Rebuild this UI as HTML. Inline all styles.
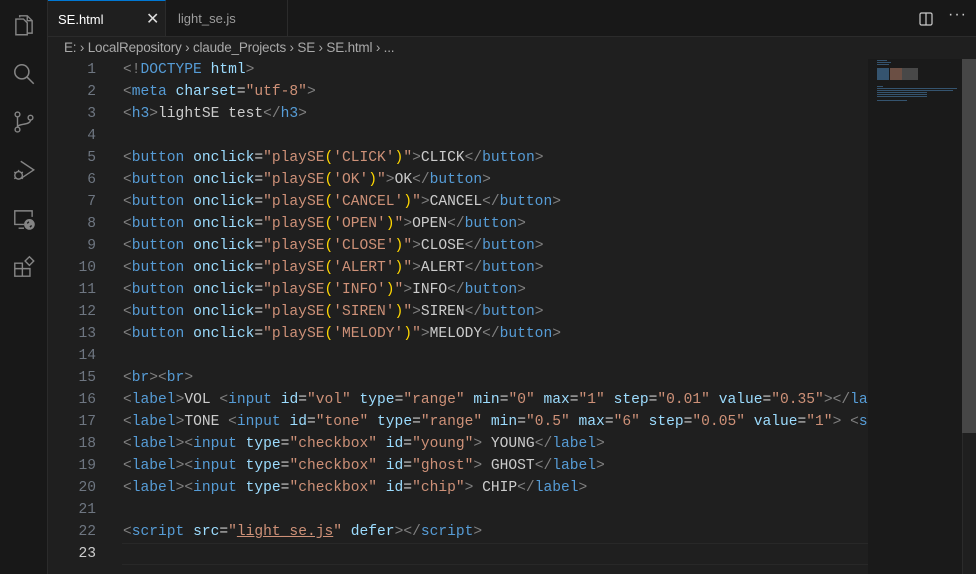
<!DOCTYPE html>
<html><head><meta charset="utf-8"><style>
html,body{margin:0;width:976px;height:574px;overflow:hidden}
body{background:#1f1f1f;position:relative;font-family:"Liberation Sans",sans-serif}
#act{position:absolute;left:0;top:0;width:47px;height:574px;background:#181818;border-right:1px solid #2b2b2b}
#act svg{position:absolute;left:11px}
#tabs{position:absolute;left:48px;top:0;right:0;height:36px;background:#181818;border-bottom:1px solid #2b2b2b}
.tab{position:absolute;top:0;height:36px;line-height:38px;font-size:13px;color:#9d9d9d;border-right:1px solid #2b2b2b}
.tab.on{background:#1f1f1f;color:#fff;border-top:1px solid #0078d4;height:36px;box-sizing:border-box;line-height:37px}
#bc{position:absolute;left:64px;top:40px;font-size:13.5px;color:#a9a9a9;letter-spacing:-0.2px}
#code{position:absolute;left:0;top:59px;font-family:"Liberation Mono",monospace;font-size:14.6px;line-height:22px;white-space:pre;color:#cccccc}
.ln{position:absolute;left:56px;width:40px;text-align:right;color:#6e7681}
.cl{position:absolute;left:123px}
.p{color:#808080}.t{color:#569cd6}.a{color:#9cdcfe}.s{color:#ce9178}.y{color:#ffd700}
#cur{position:absolute;left:122px;top:543px;width:746px;height:20px;border-top:1px solid #282828;border-bottom:1px solid #282828}
#mm{position:absolute;left:868px;top:59px;width:94px;height:515px;background:#1a1a1a}
#sb{position:absolute;left:962px;top:59px;width:14px;height:374px;background:#464646}
#sbt{position:absolute;left:962px;top:59px;width:1px;height:515px;background:#2b2b2b}
</style></head><body>
<div id="act">
<svg style="top:12px" width="26" height="26" viewBox="0 0 24 24" fill="none" stroke="#858585" stroke-width="1.3"><path d="M8 5V3.5h7l4.5 4.5v11.5H15"/><path d="M4.5 6.5h7l3.5 3.5v11H4.5z"/><path d="M15 3.5V8h4.5"/></svg>
<svg style="top:61px" width="26" height="26" viewBox="0 0 24 24" fill="none" stroke="#858585" stroke-width="1.4"><circle cx="10" cy="10" r="6.5"/><path d="M14.8 14.8L21 21"/></svg>
<svg style="top:109px" width="26" height="26" viewBox="0 0 24 24" fill="none" stroke="#858585" stroke-width="1.3"><circle cx="6" cy="5" r="2.2"/><circle cx="6" cy="19" r="2.2"/><circle cx="18" cy="8" r="2.2"/><path d="M6 7.2v9.6M18 10.2c0 5-12 3-12 6.6"/></svg>
<svg style="top:158px" width="26" height="26" viewBox="0 0 24 24" fill="none" stroke="#858585" stroke-width="1.3"><path d="M9 3l12 8-12 8"/><circle cx="7" cy="16" r="3.5"/><path d="M3 13l2 1M3 19l2-1M11 13l-2 1M11 19l-2-1M7 12v-1"/></svg>
<svg style="top:206px" width="26" height="26" viewBox="0 0 24 24" fill="none" stroke="#858585" stroke-width="1.3"><path d="M12 17H3.5V4.5h16V10"/><path d="M7 20.5h5"/><circle cx="17" cy="17" r="4.3" fill="#858585"/><path d="M15 16l1.5-1.5M19 18l-1.5 1.5" stroke="#181818"/></svg>
<svg style="top:254px" width="26" height="26" viewBox="0 0 24 24" fill="none" stroke="#858585" stroke-width="1.3"><path d="M3.5 8.5h7v12h-7zM10.5 13.5h7v7h-7zM3.5 13.5h7"/><path d="M13 6.5l4-4 4 4-4 4z"/></svg>
</div>
<div id="tabs">
<div class="tab on" style="left:0;width:118px"><span style="position:absolute;left:10px">SE.html</span><span style="position:absolute;left:98px;font-size:16px;color:#ddd">✕</span></div>
<div class="tab" style="left:118px;width:121px"><span style="position:absolute;left:12px">light_se.js</span></div>
<svg style="position:absolute;left:871px;top:12px" width="14" height="14" viewBox="0 0 14 14" fill="none" stroke="#ccc" stroke-width="1.2"><rect x="1" y="1" width="12" height="12" rx="1.5"/><path d="M7 1v12"/></svg>
<span style="position:absolute;left:900px;top:6px;color:#ccc;font-size:16px;letter-spacing:1px">···</span>
</div>
<div id="bc">E: › LocalRepository › claude_Projects › SE › SE.html › ...</div>
<div id="cur"></div>
<div id="code">
<div class="ln" style="top:0">1</div><div class="cl" style="top:0"><span class="p">&lt;!</span><span class="t">DOCTYPE</span> <span class="a">html</span><span class="p">&gt;</span></div>
<div class="ln" style="top:22px">2</div><div class="cl" style="top:22px"><span class="p">&lt;</span><span class="t">meta</span> <span class="a">charset</span>=<span class="s">"utf-8"</span><span class="p">&gt;</span></div>
<div class="ln" style="top:44px">3</div><div class="cl" style="top:44px"><span class="p">&lt;</span><span class="t">h3</span><span class="p">&gt;</span>lightSE test<span class="p">&lt;/</span><span class="t">h3</span><span class="p">&gt;</span></div>
<div class="ln" style="top:66px">4</div>
<div class="ln" style="top:88px">5</div><div class="cl" style="top:88px"><span class="p">&lt;</span><span class="t">button</span> <span class="a">onclick</span>=<span class="s">"playSE<span class="y">(</span>'CLICK'<span class="y">)</span>"</span><span class="p">&gt;</span>CLICK<span class="p">&lt;/</span><span class="t">button</span><span class="p">&gt;</span></div>
<div class="ln" style="top:110px">6</div><div class="cl" style="top:110px"><span class="p">&lt;</span><span class="t">button</span> <span class="a">onclick</span>=<span class="s">"playSE<span class="y">(</span>'OK'<span class="y">)</span>"</span><span class="p">&gt;</span>OK<span class="p">&lt;/</span><span class="t">button</span><span class="p">&gt;</span></div>
<div class="ln" style="top:132px">7</div><div class="cl" style="top:132px"><span class="p">&lt;</span><span class="t">button</span> <span class="a">onclick</span>=<span class="s">"playSE<span class="y">(</span>'CANCEL'<span class="y">)</span>"</span><span class="p">&gt;</span>CANCEL<span class="p">&lt;/</span><span class="t">button</span><span class="p">&gt;</span></div>
<div class="ln" style="top:154px">8</div><div class="cl" style="top:154px"><span class="p">&lt;</span><span class="t">button</span> <span class="a">onclick</span>=<span class="s">"playSE<span class="y">(</span>'OPEN'<span class="y">)</span>"</span><span class="p">&gt;</span>OPEN<span class="p">&lt;/</span><span class="t">button</span><span class="p">&gt;</span></div>
<div class="ln" style="top:176px">9</div><div class="cl" style="top:176px"><span class="p">&lt;</span><span class="t">button</span> <span class="a">onclick</span>=<span class="s">"playSE<span class="y">(</span>'CLOSE'<span class="y">)</span>"</span><span class="p">&gt;</span>CLOSE<span class="p">&lt;/</span><span class="t">button</span><span class="p">&gt;</span></div>
<div class="ln" style="top:198px">10</div><div class="cl" style="top:198px"><span class="p">&lt;</span><span class="t">button</span> <span class="a">onclick</span>=<span class="s">"playSE<span class="y">(</span>'ALERT'<span class="y">)</span>"</span><span class="p">&gt;</span>ALERT<span class="p">&lt;/</span><span class="t">button</span><span class="p">&gt;</span></div>
<div class="ln" style="top:220px">11</div><div class="cl" style="top:220px"><span class="p">&lt;</span><span class="t">button</span> <span class="a">onclick</span>=<span class="s">"playSE<span class="y">(</span>'INFO'<span class="y">)</span>"</span><span class="p">&gt;</span>INFO<span class="p">&lt;/</span><span class="t">button</span><span class="p">&gt;</span></div>
<div class="ln" style="top:242px">12</div><div class="cl" style="top:242px"><span class="p">&lt;</span><span class="t">button</span> <span class="a">onclick</span>=<span class="s">"playSE<span class="y">(</span>'SIREN'<span class="y">)</span>"</span><span class="p">&gt;</span>SIREN<span class="p">&lt;/</span><span class="t">button</span><span class="p">&gt;</span></div>
<div class="ln" style="top:264px">13</div><div class="cl" style="top:264px"><span class="p">&lt;</span><span class="t">button</span> <span class="a">onclick</span>=<span class="s">"playSE<span class="y">(</span>'MELODY'<span class="y">)</span>"</span><span class="p">&gt;</span>MELODY<span class="p">&lt;/</span><span class="t">button</span><span class="p">&gt;</span></div>
<div class="ln" style="top:286px">14</div>
<div class="ln" style="top:308px">15</div><div class="cl" style="top:308px"><span class="p">&lt;</span><span class="t">br</span><span class="p">&gt;&lt;</span><span class="t">br</span><span class="p">&gt;</span></div>
<div class="ln" style="top:330px">16</div><div class="cl" style="top:330px"><span class="p">&lt;</span><span class="t">label</span><span class="p">&gt;</span>VOL <span class="p">&lt;</span><span class="t">input</span> <span class="a">id</span>=<span class="s">"vol"</span> <span class="a">type</span>=<span class="s">"range"</span> <span class="a">min</span>=<span class="s">"0"</span> <span class="a">max</span>=<span class="s">"1"</span> <span class="a">step</span>=<span class="s">"0.01"</span> <span class="a">value</span>=<span class="s">"0.35"</span><span class="p">&gt;&lt;/</span><span class="t">la</span></div>
<div class="ln" style="top:352px">17</div><div class="cl" style="top:352px"><span class="p">&lt;</span><span class="t">label</span><span class="p">&gt;</span>TONE <span class="p">&lt;</span><span class="t">input</span> <span class="a">id</span>=<span class="s">"tone"</span> <span class="a">type</span>=<span class="s">"range"</span> <span class="a">min</span>=<span class="s">"0.5"</span> <span class="a">max</span>=<span class="s">"6"</span> <span class="a">step</span>=<span class="s">"0.05"</span> <span class="a">value</span>=<span class="s">"1"</span><span class="p">&gt;</span> <span class="p">&lt;</span><span class="t">s</span></div>
<div class="ln" style="top:374px">18</div><div class="cl" style="top:374px"><span class="p">&lt;</span><span class="t">label</span><span class="p">&gt;&lt;</span><span class="t">input</span> <span class="a">type</span>=<span class="s">"checkbox"</span> <span class="a">id</span>=<span class="s">"young"</span><span class="p">&gt;</span> YOUNG<span class="p">&lt;/</span><span class="t">label</span><span class="p">&gt;</span></div>
<div class="ln" style="top:396px">19</div><div class="cl" style="top:396px"><span class="p">&lt;</span><span class="t">label</span><span class="p">&gt;&lt;</span><span class="t">input</span> <span class="a">type</span>=<span class="s">"checkbox"</span> <span class="a">id</span>=<span class="s">"ghost"</span><span class="p">&gt;</span> GHOST<span class="p">&lt;/</span><span class="t">label</span><span class="p">&gt;</span></div>
<div class="ln" style="top:418px">20</div><div class="cl" style="top:418px"><span class="p">&lt;</span><span class="t">label</span><span class="p">&gt;&lt;</span><span class="t">input</span> <span class="a">type</span>=<span class="s">"checkbox"</span> <span class="a">id</span>=<span class="s">"chip"</span><span class="p">&gt;</span> CHIP<span class="p">&lt;/</span><span class="t">label</span><span class="p">&gt;</span></div>
<div class="ln" style="top:440px">21</div>
<div class="ln" style="top:462px">22</div><div class="cl" style="top:462px"><span class="p">&lt;</span><span class="t">script</span> <span class="a">src</span>=<span class="s">"<u>light_se.js</u>"</span> <span class="a">defer</span><span class="p">&gt;&lt;/</span><span class="t">script</span><span class="p">&gt;</span></div>
<div class="ln" style="top:484px;color:#ccc">23</div>
</div>
<div id="mm">
<svg width="94" height="60" style="position:absolute;left:0;top:0">
<g fill="#569cd6" opacity=".45"><rect x="9" y="1" width="10" height="1"/><rect x="9" y="3" width="14" height="1"/><rect x="9" y="5" width="12" height="1"/>
<rect x="9" y="9" width="12" height="12"/><rect x="9" y="27" width="6" height="1"/><rect x="9" y="29" width="80" height="1"/><rect x="9" y="31" width="76" height="1"/><rect x="9" y="33" width="50" height="1"/><rect x="9" y="35" width="50" height="1"/><rect x="9" y="37" width="50" height="1"/><rect x="9" y="41" width="30" height="1"/></g>
<g fill="#ce9178" opacity=".45"><rect x="22" y="9" width="12" height="12"/></g>
<g fill="#d4d4d4" opacity=".25"><rect x="34" y="9" width="16" height="12"/></g>
</svg>
</div>
<div id="sbt"></div>
<div id="sb"></div>
</body></html>
